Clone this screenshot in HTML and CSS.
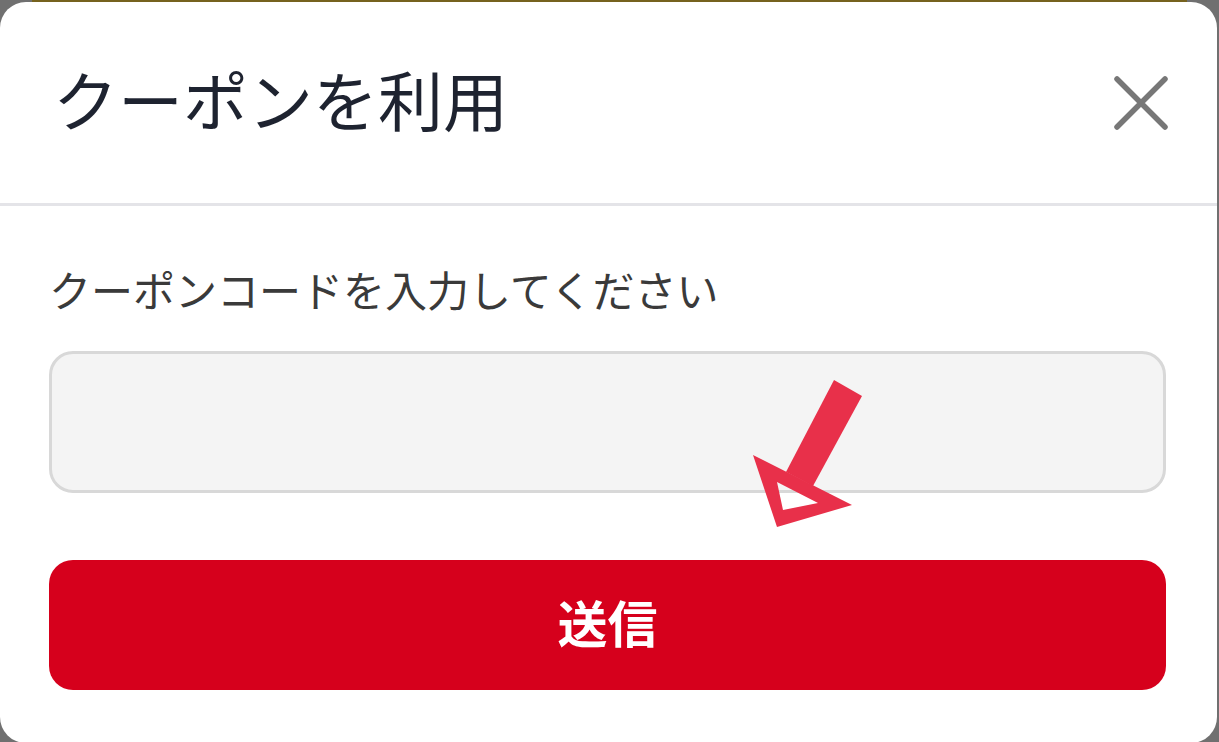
FILE: index.html
```html
<!DOCTYPE html>
<html lang="ja">
<head>
  <meta charset="UTF-8" />
  <meta name="viewport" content="width=device-width, initial-scale=1.0"/>
  <title>クーポンを利用</title>
  <link rel="stylesheet" href="styles.css">
</head>
<body>
  <div class="page-edge"></div>

  <div class="modal">
    <div class="modal-header">
      <h1 class="modal-title">クーポンを利用</h1>
      <button class="close-btn" aria-label="閉じる">
        <svg width="54" height="54" viewBox="0 0 54 54">
          <path d="M3 3 L51 51 M51 3 L3 51" stroke="#777" stroke-width="5.5" stroke-linecap="round" fill="none"/>
        </svg>
      </button>
    </div>

    <form class="modal-body">
      <label class="coupon-label" for="coupon">クーポンコードを入力してください</label>
      <input class="coupon-input" type="text" id="coupon" name="coupon" />
      <button class="submit-btn" type="submit">送信</button>
    </form>

    <!-- annotation arrow drawn over the form -->
    <svg class="hint-arrow" width="1219" height="742" viewBox="0 0 1219 742">
      <polygon points="834,380 862,396 813,486 786,472" fill="#e8304a"/>
      <path d="M753 455 L852 505 L777 527 Z M777 482 L783 510 L818 503 Z" fill="#e8304a" fill-rule="evenodd"/>
    </svg>
  </div>
</body>
</html>
```

FILE: styles.css
```css
body {
  margin: 0;
  background: #707070;
  font-family: "Noto Sans CJK JP", "Noto Sans", sans-serif;
  height: 742px;
  overflow: hidden;
}
.page-edge {
  height: 3px;
  margin: 0 32px;
  background: #76621e;
}
.modal {
  position: relative;
  width: 1217px;
  height: 741px;
  margin-top: -1px;
  background: #fff;
  border-radius: 26px;
  overflow: hidden;
}
.modal-header {
  height: 201px;
  display: flex;
  align-items: center;
  justify-content: space-between;
  padding: 0 49px 0 53px;
  border-bottom: 3px solid #e4e4e8;
}
.modal-title {
  margin: 0 0 8px;
  font-size: 65px;
  font-weight: 400;
  line-height: 1;
  color: #1e2330;
}
.close-btn {
  background: none;
  border: none;
  padding: 0;
  width: 54px;
  height: 54px;
  cursor: pointer;
}
.modal-body {
  padding: 0 51px 0 49px;
}
.coupon-label {
  display: block;
  margin-top: 58px;
  font-size: 42px;
  line-height: 50px;
  color: #3a3a3a;
}
.coupon-input {
  display: block;
  box-sizing: border-box;
  width: 100%;
  height: 142px;
  margin-top: 37px;
  background: #f4f4f4;
  border: 3px solid #d8d8d8;
  border-radius: 24px;
}
.submit-btn {
  display: block;
  width: 100%;
  height: 130px;
  margin-top: 67px;
  padding-bottom: 10px;
  background: #d6001c;
  color: #fff;
  border: none;
  border-radius: 24px;
  font-family: inherit;
  font-size: 50px;
  font-weight: 700;
  cursor: pointer;
}
.hint-arrow {
  position: absolute;
  left: 0;
  top: -2px;
  pointer-events: none;
}
```
